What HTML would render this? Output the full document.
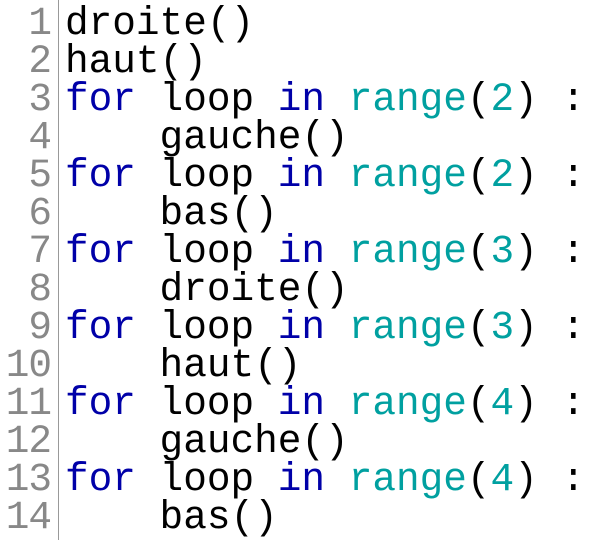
<!DOCTYPE html>
<html><head><style>
body{margin:0;background:#fff;width:596px;height:540px;overflow:hidden}
.w{position:relative;font-family:"Liberation Mono",monospace;font-size:39.4px;line-height:38px;padding-top:5px}
.n{position:absolute;left:0;width:51px;text-align:right;color:#888;letter-spacing:-1px}
.b{position:absolute;left:58px;top:0;width:1px;height:540px;background:#999}
.c{position:absolute;left:65px;white-space:pre;color:#000}
.k{color:#0000a8}.r{color:#00a0a0}
</style></head><body><div class="w">
<div class="b"></div>
<div class="n">1<br>2<br>3<br>4<br>5<br>6<br>7<br>8<br>9<br>10<br>11<br>12<br>13<br>14</div>
<div class="c">droite()
haut()
<span class="k">for</span> loop <span class="k">in</span> <span class="r">range</span>(<span class="r">2</span>) :
    gauche()
<span class="k">for</span> loop <span class="k">in</span> <span class="r">range</span>(<span class="r">2</span>) :
    bas()
<span class="k">for</span> loop <span class="k">in</span> <span class="r">range</span>(<span class="r">3</span>) :
    droite()
<span class="k">for</span> loop <span class="k">in</span> <span class="r">range</span>(<span class="r">3</span>) :
    haut()
<span class="k">for</span> loop <span class="k">in</span> <span class="r">range</span>(<span class="r">4</span>) :
    gauche()
<span class="k">for</span> loop <span class="k">in</span> <span class="r">range</span>(<span class="r">4</span>) :
    bas()</div>
</div></body></html>
